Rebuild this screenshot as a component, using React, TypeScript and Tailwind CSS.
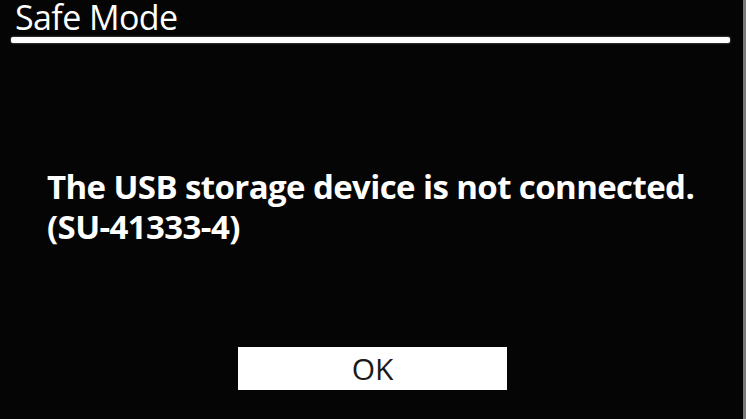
export default function App() {
  return (
    <div className="w-[746px] h-[419px] bg-[#050505] flex overflow-hidden" style={{ fontFamily: '"Open Sans", sans-serif' }}>
      <div className="flex-1 flex flex-col">
        <div className="pl-[15px] h-[37px] flex items-start">
          <span className="text-white text-[34px] leading-none tracking-[-0.6px] whitespace-nowrap">Safe Mode</span>
        </div>
        <div className="ml-[11px] mr-[13px] h-[6px] bg-white rounded-[2px] shadow-[0_0_2px_#999]" />
        <div className="pl-[47px] pt-[124px] text-white font-bold text-[33px] leading-[40px] tracking-[-0.6px] whitespace-nowrap">
          <div>The USB storage device is not connected.</div>
          <div>(SU-41333-4)</div>
        </div>
        <div className="flex pl-[238px] pt-[100px]">
          <div className="w-[269px] h-[43px] bg-white flex items-center justify-center text-[#1a1a1a] text-[30px] leading-none">OK</div>
        </div>
      </div>
      <div className="w-[3px] bg-[#7a7a7a]" />
    </div>
  );
}
